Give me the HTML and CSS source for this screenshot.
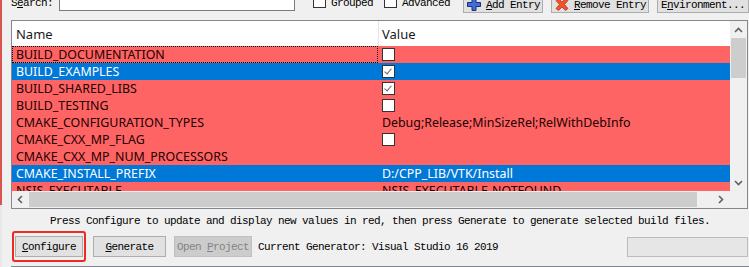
FILE: index.html
```html
<!DOCTYPE html>
<html lang="en">
<head>
  <meta charset="UTF-8" />
  <title>CMake</title>
  <link rel="stylesheet" href="styles.css">
</head>
<body>
  <div class="window">
    <div class="edge"></div>

    <main class="main">
      <div class="toolbar">
        <label class="search-label">S<u>e</u>arch:</label>
        <div class="search-box"></div>
        <span class="check check-grouped"></span>
        <span class="tool-text">Grouped</span>
        <span class="check check-advanced"></span>
        <span class="tool-text">Advanced</span>
        <button class="tool-btn add-btn">
          <svg class="icon" width="14" height="13" viewBox="0 0 14 13">
            <path d="M5 0.5h4v4h4.5v4H9v4H5v-4H0.5v-4H5z" fill="#3f6fd6" stroke="#1c2f78" stroke-width="1"/>
          </svg>
          <span><u>A</u>dd Entry</span>
        </button>
        <button class="tool-btn remove-btn">
          <svg class="icon" width="14" height="13" viewBox="0 0 14 13">
            <path d="M1 2.5L3.5 0.5L7 4L10.5 0.5L13 2.5L9.5 6.5L13 10.5L10.5 12.5L7 9L3.5 12.5L1 10.5L4.5 6.5z" fill="#f0522a" stroke="#b8391c" stroke-width="0.8"/>
          </svg>
          <span><u>R</u>emove Entry</span>
        </button>
        <button class="tool-btn env-btn">E<u>n</u>vironment...</button>
      </div>

      <div class="list">
        <div class="viewport">
          <div class="list-header">
            <div class="col-name">Name</div>
            <div class="col-value">Value</div>
          </div>
          <div class="row red">
            <div class="cell-name focus">BUILD_DOCUMENTATION</div>
            <div class="cell-value"><span class="box"></span></div>
          </div>
          <div class="row blue">
            <div class="cell-name">BUILD_EXAMPLES</div>
            <div class="cell-value"><span class="box checked"></span></div>
          </div>
          <div class="row red">
            <div class="cell-name">BUILD_SHARED_LIBS</div>
            <div class="cell-value"><span class="box checked"></span></div>
          </div>
          <div class="row red">
            <div class="cell-name">BUILD_TESTING</div>
            <div class="cell-value"><span class="box"></span></div>
          </div>
          <div class="row red">
            <div class="cell-name">CMAKE_CONFIGURATION_TYPES</div>
            <div class="cell-value">Debug;Release;MinSizeRel;RelWithDebInfo</div>
          </div>
          <div class="row red">
            <div class="cell-name">CMAKE_CXX_MP_FLAG</div>
            <div class="cell-value"><span class="box"></span></div>
          </div>
          <div class="row red">
            <div class="cell-name">CMAKE_CXX_MP_NUM_PROCESSORS</div>
            <div class="cell-value"></div>
          </div>
          <div class="row blue">
            <div class="cell-name">CMAKE_INSTALL_PREFIX</div>
            <div class="cell-value">D:/CPP_LIB/VTK/Install</div>
          </div>
          <div class="row red">
            <div class="cell-name">NSIS_EXECUTABLE</div>
            <div class="cell-value">NSIS_EXECUTABLE-NOTFOUND</div>
          </div>
        </div>

        <div class="vscroll">
          <div class="arrow">
            <svg width="9" height="6" viewBox="0 0 9 6"><path d="M1 5L4.5 1.5L8 5" fill="none" stroke="#606060" stroke-width="1.6"/></svg>
          </div>
          <div class="vthumb"></div>
          <div class="vtrack"></div>
          <div class="arrow">
            <svg width="9" height="6" viewBox="0 0 9 6"><path d="M1 1L4.5 4.5L8 1" fill="none" stroke="#606060" stroke-width="1.6"/></svg>
          </div>
        </div>

        <div class="hscroll">
          <div class="arrow">
            <svg width="6" height="9" viewBox="0 0 6 9"><path d="M5 1L1.5 4.5L5 8" fill="none" stroke="#606060" stroke-width="1.6"/></svg>
          </div>
          <div class="hthumb"></div>
          <div class="htrack"></div>
          <div class="arrow">
            <svg width="6" height="9" viewBox="0 0 6 9"><path d="M1 1L4.5 4.5L1 8" fill="none" stroke="#606060" stroke-width="1.6"/></svg>
          </div>
        </div>

        <div class="corner"></div>
      </div>

      <p class="hint">Press Configure to update and display new values in red, then press Generate to generate selected build files.</p>

      <div class="actions">
        <span class="mark">
          <button class="btn configure-btn"><u>C</u>onfigure</button>
        </span>
        <button class="btn generate-btn"><u>G</u>enerate</button>
        <button class="btn open-btn" disabled>Open <u>P</u>roject</button>
        <span class="generator">Current Generator: Visual Studio 16 2019</span>
        <div class="progress"></div>
      </div>

      <div class="output"></div>
    </main>
  </div>
</body>
</html>
```

FILE: styles.css
```css
* {
  margin: 0;
  padding: 0;
  box-sizing: border-box;
}

body {
  width: 749px;
  height: 267px;
  overflow: hidden;
  background: #f0f0f0;
  color: #000;
  font-family: "Liberation Mono", "DejaVu Sans Mono", monospace;
  font-size: 11px;
  letter-spacing: -0.6px;
}

.window {
  display: flex;
  height: 100%;
}

.edge {
  width: 3px;
  background: linear-gradient(#d9534f 0, #d9534f 205px, #e8e8e8 205px);
}

.main {
  flex: 1;
  padding-left: 9px;
  display: flex;
  flex-direction: column;
}

/* top toolbar, cut off by the top of the window */
.toolbar {
  display: flex;
  align-items: flex-start;
  height: 21px;
  margin-top: -8px;
  margin-bottom: 7px;
  white-space: nowrap;
}

.search-label {
  width: 48px;
  margin-top: 5px;
  line-height: 13px;
}

.search-box {
  width: 236px;
  height: 20px;
  margin-top: -1px;
  background: #fff;
  border: 1px solid #7a7a7a;
}

.check {
  width: 13px;
  height: 13px;
  margin-top: 3px;
  background: #fff;
  border: 1px solid #333;
}

.check-grouped {
  margin-left: 18px;
}

.check-advanced {
  margin-left: 11px;
}

.tool-text {
  margin-left: 5px;
  margin-top: 5px;
  line-height: 13px;
}

.tool-btn {
  display: flex;
  align-items: center;
  height: 21px;
  padding: 4px 3px 0;
  background: #e1e1e1;
  border: 1px solid #adadad;
  font: inherit;
  letter-spacing: inherit;
  color: #000;
  white-space: nowrap;
  overflow: hidden;
}

.tool-btn .icon {
  margin-right: 5px;
  flex-shrink: 0;
}

.add-btn {
  width: 80px;
  margin-left: 13px;
}

.remove-btn {
  width: 98px;
  margin-left: 8px;
}

.env-btn {
  width: 92px;
  margin-left: 8px;
}

/* cache list */
.list {
  display: grid;
  grid-template-columns: 718px 17px;
  grid-template-rows: 170px 17px;
  width: 737px;
  height: 189px;
  border: 1px solid #828790;
  background: #fff;
  font-family: "Noto Sans", "Open Sans", sans-serif;
  font-size: 12.4px;
  letter-spacing: 0;
  white-space: nowrap;
}

.viewport {
  overflow: hidden;
}

.list-header {
  display: flex;
  height: 25px;
  align-items: center;
  background: #fff;
  font-size: 13px;
  color: #1a1a1a;
}

.col-name {
  width: 366px;
  padding-left: 4px;
}

.col-value {
  height: 100%;
  display: flex;
  align-items: center;
  padding-left: 3px;
  border-left: 1px solid #e5e5e5;
}

.row {
  display: flex;
  height: 17px;
  line-height: 17px;
}

.row.red {
  background: #ff6464;
  color: #200000;
}

.row.blue {
  background: #0078d7;
  color: #fff;
}

.cell-name {
  width: 366px;
  flex-shrink: 0;
  padding-left: 4px;
}

.cell-name.focus {
  outline: 1px dotted #000;
  outline-offset: -1px;
}

.cell-value {
  display: flex;
  align-items: center;
  padding-left: 4px;
}

.box {
  position: relative;
  width: 13px;
  height: 13px;
  margin-top: -1px;
  background: #fff;
  border: 1px solid #333;
}

.box.checked::after {
  content: "";
  position: absolute;
  left: 3px;
  top: 1px;
  width: 3px;
  height: 6px;
  border: solid #666;
  border-width: 0 1.5px 1.5px 0;
  transform: rotate(40deg);
}

/* scroll bars */
.vscroll {
  display: flex;
  flex-direction: column;
  background: #f0f0f0;
}

.hscroll {
  display: flex;
  background: #f0f0f0;
}

.arrow {
  width: 17px;
  height: 17px;
  display: flex;
  align-items: center;
  justify-content: center;
  flex-shrink: 0;
}

.vthumb {
  height: 40px;
  margin: 0 1px;
  background: #cdcdcd;
}

.vtrack {
  flex: 1;
}

.hthumb {
  width: 668px;
  margin: 1px 0;
  background: #cdcdcd;
}

.htrack {
  flex: 1;
}

.corner {
  background: #f0f0f0;
}

/* bottom */
.hint {
  margin-top: 3px;
  line-height: 19px;
  text-align: center;
  white-space: nowrap;
}

.actions {
  display: flex;
  align-items: center;
  height: 31px;
  white-space: nowrap;
}

.mark {
  display: flex;
  margin-left: 1px;
  padding: 3px 1px;
  border: 2px solid #ee2a24;
  border-radius: 3px;
}

.btn {
  height: 21px;
  background: #e1e1e1;
  border: 1px solid #adadad;
  font: inherit;
  letter-spacing: inherit;
  color: #000;
}

.configure-btn {
  width: 68px;
}

.generate-btn {
  width: 73px;
  margin-left: 7px;
}

.open-btn {
  width: 78px;
  margin-left: 8px;
  background: #cccccc;
  border-color: #bfbfbf;
  color: #838383;
}

.generator {
  margin-left: 6px;
}

.progress {
  width: 121px;
  height: 20px;
  margin-left: auto;
  margin-right: 1px;
  background: #e6e6e6;
  border: 1px solid #bcbcbc;
}

.output {
  margin-top: 4px;
  height: 10px;
  border-top: 1px solid #828790;
  border-left: 1px solid #828790;
  background: #fff;
}
```
